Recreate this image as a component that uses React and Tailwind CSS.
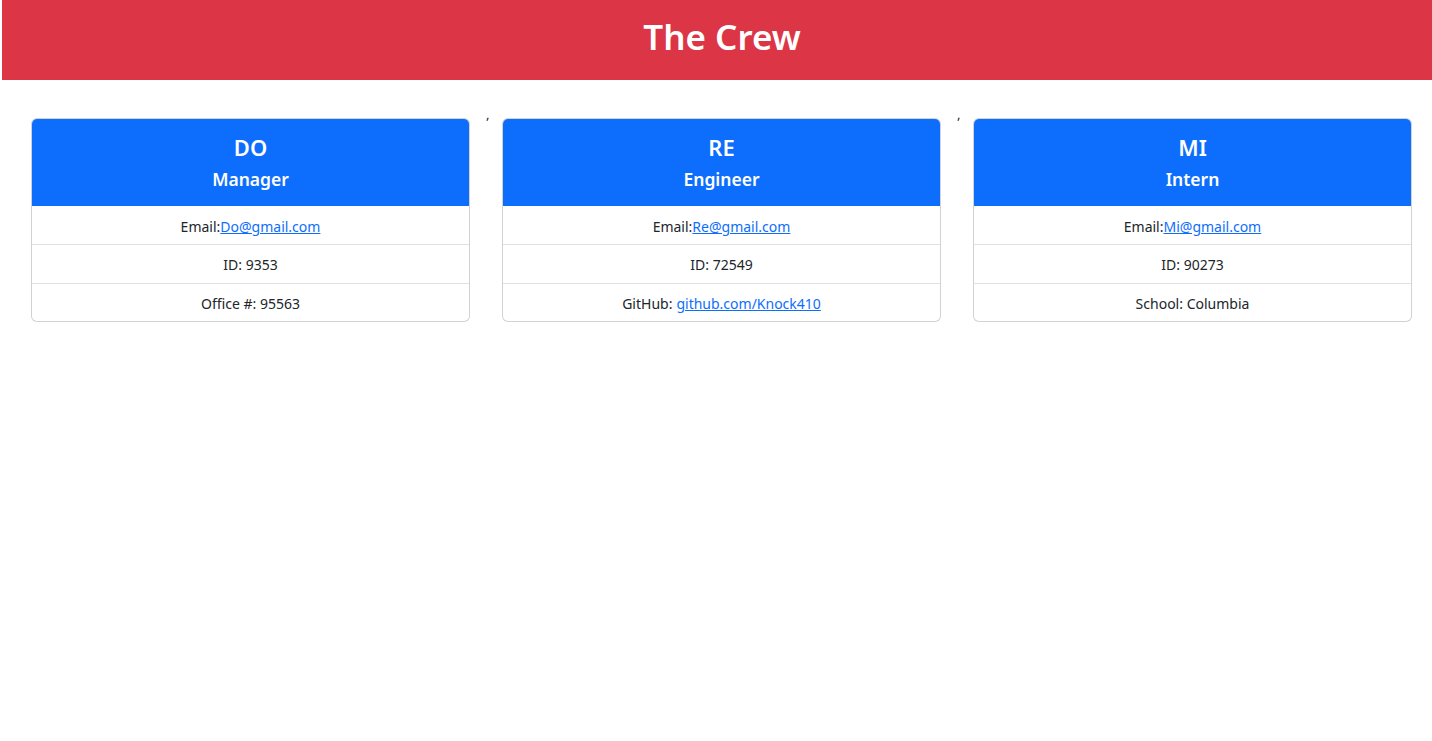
import React from "react";

const crew = [
  { name: "DO", role: "Manager", email: "Do@gmail.com", id: "9353", extra: { label: "Office #: ", value: "95563" } },
  { name: "RE", role: "Engineer", email: "Re@gmail.com", id: "72549", extra: { label: "GitHub: ", value: "github.com/Knock410", link: true } },
  { name: "MI", role: "Intern", email: "Mi@gmail.com", id: "90273", extra: { label: "School: ", value: "Columbia" } },
];

const Card = ({ member }) => (
  <div className="m-4 w-[439px] shrink-0 overflow-hidden rounded-[6px] border border-[rgba(0,0,0,0.175)] bg-white">
    <div className="flex h-[87px] flex-col items-center justify-center bg-[#0d6efd] pt-[1px] text-white">
      <div className="text-[22px] font-semibold leading-[32px]">{member.name}</div>
      <div className="text-[17.5px] font-semibold leading-[32px]">{member.role}</div>
    </div>
    <ul className="text-[14px] text-[#212529]">
      <li className="flex h-[39px] items-center justify-center border-b border-[#dee2e6] pt-[3px]">
        Email:<a href="#" className="text-[#0d6efd] underline">{member.email}</a>
      </li>
      <li className="flex h-[39px] items-center justify-center border-b border-[#dee2e6] pt-[1px]">ID: {member.id}</li>
      <li className="flex h-[37px] items-center justify-center pt-[2px]">
        {member.extra.label}
        {member.extra.link ? (
          <a href="#" className="ml-[4px] text-[#0d6efd] underline">{member.extra.value}</a>
        ) : (
          member.extra.value
        )}
      </li>
    </ul>
  </div>
);

const App = () => {
  return (
    <div className="min-h-screen bg-white font-['Noto_Sans',sans-serif]">
      <header className="ml-[2px] flex h-[80px] items-center justify-center bg-[#dc3545] pb-[8px] pl-[10px]">
        <h1 className="text-[35px] font-semibold leading-none text-white">The Crew</h1>
      </header>
      <main className="mt-[22px] flex items-start pl-[15px]">
        {crew.map((m, i) => (
          <React.Fragment key={m.name}>
            {i > 0 && <span className="w-0 text-[13px] leading-[24px] text-[#212529]">,</span>}
            <Card member={m} />
          </React.Fragment>
        ))}
      </main>
    </div>
  );
};

export default App;
